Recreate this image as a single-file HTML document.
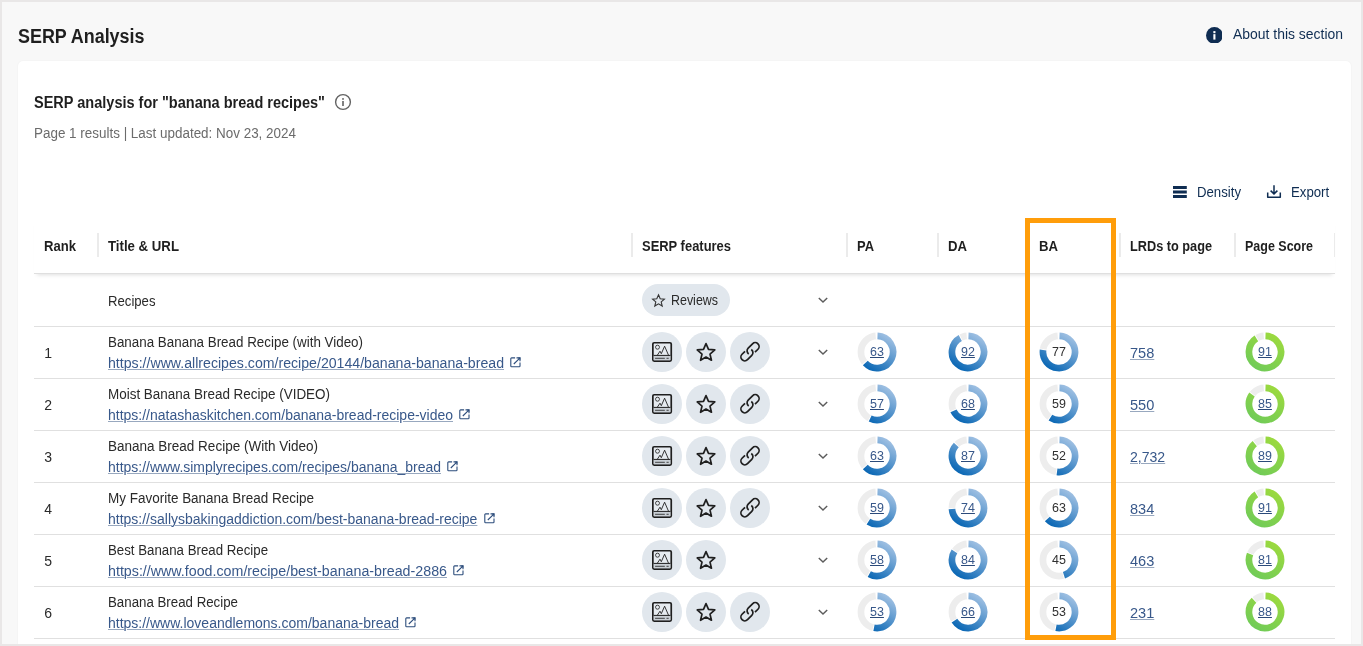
<!DOCTYPE html>
<html lang="en"><head><meta charset="utf-8"><title>SERP Analysis</title>
<style>
html,body{margin:0;padding:0}
body{width:1363px;height:646px;overflow:hidden;position:relative;background:#f8f8f8;font-family:"Liberation Sans",sans-serif;color:#2a2a2a}
.frame{position:absolute;left:0;top:0;width:1359px;height:642px;border:2px solid #e9e7e7;z-index:50;pointer-events:none}
.card{position:absolute;left:18px;top:61px;width:1333px;height:600px;background:#fff;border-radius:5px;box-shadow:0 0 2px rgba(0,0,0,.06)}
.t{position:absolute;white-space:nowrap;margin:0;font-weight:400;transform-origin:0 0;line-height:1.2}
.pb{display:inline-block;width:0;height:0}
#L{position:absolute;left:0;top:0;width:1363px;height:646px;will-change:transform}
.b{font-weight:700}
.navy{color:#0f2d52}
.gray{color:#6b6b6b}
.lk{color:#38588a;text-decoration:underline;text-decoration-thickness:1px;text-underline-offset:1px;text-decoration-color:rgba(49,82,127,.5)}
.nl{text-decoration-color:#2b4a7a}
.ic,.dn{position:absolute;display:block}
.hl{position:absolute;left:34px;width:1301px;height:1px;background:#e0e0e0}
.sep{position:absolute;top:233px;width:2px;height:24px;background:#ebebeb}
.hsh{position:absolute;left:34px;top:219px;width:1301px;height:54px;border-bottom:1px solid #dfdfdf;box-shadow:0 4px 4px -3px rgba(0,0,0,.13)}
.pill{position:absolute;left:642px;top:284px;width:88px;height:32px;border-radius:16px;background:#e1e7ed}
.ob{position:absolute;left:1025px;top:218px;width:81px;height:412px;border:5px solid #ff9d0a;z-index:20}
</style></head><body>
<div class="card"></div>
<div id="L">
<svg width="0" height="0" style="position:absolute"><defs>
<linearGradient id="gb" gradientUnits="userSpaceOnUse" x1="32" y1="3" x2="10" y2="37"><stop offset="0" stop-color="#a4c3e4"/><stop offset="1" stop-color="#0866b4"/></linearGradient>
<linearGradient id="gg" gradientUnits="userSpaceOnUse" x1="32" y1="3" x2="10" y2="37"><stop offset="0" stop-color="#9dda3e"/><stop offset="1" stop-color="#70cb58"/></linearGradient>
</defs></svg>

<h1 class="t b" id="t1" style="left:18px;top:24.01px;font-size:20px;transform:scaleX(0.896);color:#1f1f1f;">SERP Analysis</h1>
<svg class="ic" style="left:1205.6px;top:26.6px" width="16.8" height="16.8" viewBox="0 0 16 16"><circle cx="8" cy="8" r="8" fill="#0f2d52"/><rect x="7" y="6.8" width="2" height="5.2" fill="#fff"/><rect x="7" y="3.9" width="2" height="2" fill="#fff"/></svg>
<span class="t navy" id="t2" style="left:1233px;top:26.00px;font-size:14px;transform:scaleX(0.9953);">About this section</span>
<h2 class="t b" id="t3" style="left:34px;top:93.00px;font-size:16px;transform:scaleX(0.9071);color:#1f1f1f;">SERP analysis for "banana bread recipes"</h2>
<svg class="ic" style="left:334px;top:93px" width="18" height="18" viewBox="0 0 18 18"><circle cx="9" cy="9" r="7.4" fill="none" stroke="#636363" stroke-width="1.4"/><rect x="8.2" y="8" width="1.6" height="5" fill="#636363"/><rect x="8.2" y="5.1" width="1.6" height="1.7" fill="#636363"/></svg>
<span class="t gray" id="t4" style="left:34px;top:125.00px;font-size:14px;transform:scaleX(0.9599);">Page 1 results | Last updated: Nov 23, 2024</span>
<svg class="ic" style="left:1173px;top:186px" width="14" height="12" viewBox="0 0 14 12"><path d="M0 1.5H13.8M0 6H13.8M0 10.5H13.8" stroke="#0f2d52" stroke-width="2.9"/></svg>
<span class="t navy" id="t5" style="left:1196.8px;top:183.81px;font-size:14px;transform:scaleX(0.9424);">Density</span>
<svg class="ic" style="left:1266px;top:184px" width="16" height="16" viewBox="0 0 16 16"><path d="M1.7 8.5V13.3H14.3V8.5" fill="none" stroke="#0f2d52" stroke-width="1.5" stroke-linejoin="round"/><path d="M8 1.2V9.6M4.6 6.6L8 9.9L11.4 6.6" fill="none" stroke="#0f2d52" stroke-width="1.5"/></svg>
<span class="t navy" id="t6" style="left:1291.2px;top:183.81px;font-size:14px;transform:scaleX(0.9439);">Export</span>
<span class="t b" id="t7" style="left:44px;top:238.00px;font-size:14px;transform:scaleX(0.9347);color:#1f1f1f;">Rank</span>
<span class="t b" id="t8" style="left:108px;top:238.00px;font-size:14px;transform:scaleX(0.9441);color:#1f1f1f;">Title &amp; URL</span>
<span class="t b" id="t9" style="left:642px;top:238.00px;font-size:14px;transform:scaleX(0.9248);color:#1f1f1f;">SERP features</span>
<span class="t b" id="t10" style="left:856.6px;top:238.00px;font-size:14px;transform:scaleX(0.9228);color:#1f1f1f;">PA</span>
<span class="t b" id="t11" style="left:948px;top:238.00px;font-size:14px;transform:scaleX(0.939);color:#1f1f1f;">DA</span>
<span class="t b" id="t12" style="left:1039px;top:238.00px;font-size:14px;transform:scaleX(0.939);color:#1f1f1f;">BA</span>
<span class="t b" id="t13" style="left:1130px;top:238.00px;font-size:14px;transform:scaleX(0.9087);color:#1f1f1f;">LRDs to page</span>
<span class="t b" id="t14" style="left:1245px;top:238.00px;font-size:14px;transform:scaleX(0.8916);color:#1f1f1f;">Page Score</span>
<div class="sep" style="left:97px"></div>
<div class="sep" style="left:631px"></div>
<div class="sep" style="left:846px"></div>
<div class="sep" style="left:937px"></div>
<div class="sep" style="left:1028px"></div>
<div class="sep" style="left:1119px"></div>
<div class="sep" style="left:1234px"></div>
<div class="sep" style="left:1334px;width:1px"></div>
<div class="hsh"></div>
<span class="t " id="t15" style="left:108.3px;top:293.00px;font-size:14px;transform:scaleX(0.9389);">Recipes</span>
<div class="pill"></div>
<svg class="ic" style="left:650.7px;top:292.6px" width="15" height="15" viewBox="0 0 15 15"><path d="M7.5 1.8L9.2 5.7L13.4 6.1L10.2 8.9L11.2 13L7.5 10.8L3.8 13L4.8 8.9L1.6 6.1L5.8 5.7Z" fill="none" stroke="#333" stroke-width="1.1"/></svg>
<span class="t " id="t16" style="left:671.3px;top:292.00px;font-size:14px;transform:scaleX(0.8884);">Reviews</span>
<svg class="ic" style="left:817px;top:296px" width="12" height="8" viewBox="0 0 12 8"><path d="M1.8 1.9L6 5.9L10.2 1.9" fill="none" stroke="#5c5c5c" stroke-width="1.45"/></svg>
<div class="hl" style="top:326px"></div>
<div class="hl" style="top:378px"></div>
<div class="hl" style="top:430px"></div>
<div class="hl" style="top:482px"></div>
<div class="hl" style="top:534px"></div>
<div class="hl" style="top:586px"></div>
<div class="hl" style="top:638px"></div>
<span class="t " id="t17" style="left:44.3px;top:345.00px;font-size:14px;">1</span>
<span class="t " id="t18" style="left:108px;top:334.00px;font-size:14px;transform:scaleX(0.9561);">Banana Banana Bread Recipe (with Video)</span>
<a class="t lk" id="t19" style="left:108px;top:355.00px;font-size:14px;transform:scaleX(1.0096);">https://www.allrecipes.com/recipe/20144/banana-banana-bread</a>
<svg class="ic" style="left:510.1px;top:356.8px" width="12" height="12" viewBox="0 0 12 12"><path d="M5.1 .9H1.6A.8.8 0 0 0 .8 1.7V8.9A.8.8 0 0 0 1.6 9.7H9.2A.8.8 0 0 0 10 8.9V5.4" fill="none" stroke="#2d4d7c" stroke-width="1.1"/><path d="M6.5 .9H10V4.2M9.8 1.1L3.8 7" fill="none" stroke="#2d4d7c" stroke-width="1.1"/><path d="M10.4 .5V2.9L8 .5Z" fill="#2d4d7c"/></svg>
<svg class="ic" style="left:642px;top:332px" width="40" height="40" viewBox="0 0 40 40"><circle cx="20" cy="20" r="20" fill="#e1e7ed"/><rect x="10.85" y="10.75" width="18.4" height="18.3" rx="1.3" fill="#e6ebf0" stroke="#1f1f1f" stroke-width="1.7"/><rect x="11.7" y="23.4" width="16.7" height="4.8" fill="#c9cfd5"/><path d="M11.5 23.4H28.5" fill="none" stroke="#1f1f1f" stroke-width="1"/><path d="M13.1 26.3H22.8M24.5 26.3H26.7" fill="none" stroke="#1f1f1f" stroke-width="0.8"/><circle cx="15.5" cy="15.2" r="2" fill="none" stroke="#1f1f1f" stroke-width="0.8"/><path d="M15.2 23.4L18 19.2L19.3 21.7L22.6 14.2L26.6 23.4" fill="none" stroke="#1f1f1f" stroke-width="0.9" stroke-linejoin="round"/></svg>
<svg class="ic" style="left:686px;top:332px" width="40" height="40" viewBox="0 0 40 40"><circle cx="20" cy="20" r="20" fill="#e1e7ed"/><path d="M20 11.6L22.5 17.4L28.8 17.95L24.0 22.1L25.45 28.25L20 25L14.55 28.25L16.0 22.1L11.2 17.95L17.5 17.4Z" fill="none" stroke="#1f1f1f" stroke-width="1.7" stroke-linejoin="round"/></svg>
<svg class="ic" style="left:730px;top:332px" width="40" height="40" viewBox="0 0 40 40"><circle cx="20" cy="20" r="20" fill="#e1e7ed"/><g transform="translate(20 19.75) rotate(-45)" fill="none" stroke="#1f1f1f" stroke-width="1.7"><path d="M3.2 3.85H7.4A3.85 3.85 0 0 0 7.4 -3.85H1.3A3.85 3.85 0 0 0 -2.49 0.67"/><path d="M-3.2 -3.85H-7.4A3.85 3.85 0 0 0 -7.4 3.85H-1.3A3.85 3.85 0 0 0 2.49 -0.67"/></g></svg>
<svg class="ic" style="left:817px;top:348px" width="12" height="8" viewBox="0 0 12 8"><path d="M1.8 1.9L6 5.9L10.2 1.9" fill="none" stroke="#5c5c5c" stroke-width="1.45"/></svg>
<svg class="dn" style="left:857.15px;top:332.15px" width="40" height="40" viewBox="0 0 40 40"><circle cx="20" cy="20" r="16.05" fill="none" stroke="#ededed" stroke-width="6.7"/><path d="M18.70 4.00A16.05 16.05 0 1 1 7.70 30.31" fill="none" stroke="#fff" stroke-width="7.7"/><path d="M20.50 3.96A16.05 16.05 0 1 1 8.30 30.99" fill="none" stroke="url(#gb)" stroke-width="6.7"/></svg>
<a class="t lk nl" id="t20" style="left:870.05px;top:345.01px;font-size:12px;transform:scaleX(1.0405);">63</a>
<svg class="dn" style="left:948.15px;top:332.15px" width="40" height="40" viewBox="0 0 40 40"><circle cx="20" cy="20" r="16.05" fill="none" stroke="#ededed" stroke-width="6.7"/><path d="M18.70 4.00A16.05 16.05 0 1 1 13.07 5.52" fill="none" stroke="#fff" stroke-width="7.7"/><path d="M20.50 3.96A16.05 16.05 0 1 1 12.27 5.94" fill="none" stroke="url(#gb)" stroke-width="6.7"/></svg>
<a class="t lk nl" id="t21" style="left:961.05px;top:345.01px;font-size:12px;transform:scaleX(1.0405);">92</a>
<svg class="dn" style="left:1039.15px;top:332.15px" width="40" height="40" viewBox="0 0 40 40"><circle cx="20" cy="20" r="16.05" fill="none" stroke="#ededed" stroke-width="6.7"/><path d="M18.70 4.00A16.05 16.05 0 1 1 4.21 17.10" fill="none" stroke="#fff" stroke-width="7.7"/><path d="M20.50 3.96A16.05 16.05 0 1 1 4.08 17.99" fill="none" stroke="url(#gb)" stroke-width="6.7"/></svg>
<span class="t " id="t22" style="left:1052.05px;top:345.01px;font-size:12px;transform:scaleX(1.0405);color:#303030;">77</span>
<a class="t lk" id="t23" style="left:1130px;top:345.00px;font-size:14px;transform:scaleX(1.0403);">758</a>
<svg class="dn" style="left:1245.15px;top:332.15px" width="40" height="40" viewBox="0 0 40 40"><circle cx="20" cy="20" r="16.05" fill="none" stroke="#ededed" stroke-width="6.7"/><path d="M18.70 4.00A16.05 16.05 0 1 1 12.17 5.99" fill="none" stroke="#fff" stroke-width="7.7"/><path d="M20.50 3.96A16.05 16.05 0 1 1 11.40 6.45" fill="none" stroke="url(#gg)" stroke-width="6.7"/></svg>
<a class="t lk nl" id="t24" style="left:1258.05px;top:345.01px;font-size:12px;transform:scaleX(1.0405);">91</a>
<span class="t " id="t25" style="left:44.3px;top:397.00px;font-size:14px;">2</span>
<span class="t " id="t26" style="left:108px;top:386.00px;font-size:14px;transform:scaleX(0.9606);">Moist Banana Bread Recipe (VIDEO)</span>
<a class="t lk" id="t27" style="left:108px;top:407.00px;font-size:14px;transform:scaleX(0.9984);">https://natashaskitchen.com/banana-bread-recipe-video</a>
<svg class="ic" style="left:459.1px;top:408.8px" width="12" height="12" viewBox="0 0 12 12"><path d="M5.1 .9H1.6A.8.8 0 0 0 .8 1.7V8.9A.8.8 0 0 0 1.6 9.7H9.2A.8.8 0 0 0 10 8.9V5.4" fill="none" stroke="#2d4d7c" stroke-width="1.1"/><path d="M6.5 .9H10V4.2M9.8 1.1L3.8 7" fill="none" stroke="#2d4d7c" stroke-width="1.1"/><path d="M10.4 .5V2.9L8 .5Z" fill="#2d4d7c"/></svg>
<svg class="ic" style="left:642px;top:384px" width="40" height="40" viewBox="0 0 40 40"><circle cx="20" cy="20" r="20" fill="#e1e7ed"/><rect x="10.85" y="10.75" width="18.4" height="18.3" rx="1.3" fill="#e6ebf0" stroke="#1f1f1f" stroke-width="1.7"/><rect x="11.7" y="23.4" width="16.7" height="4.8" fill="#c9cfd5"/><path d="M11.5 23.4H28.5" fill="none" stroke="#1f1f1f" stroke-width="1"/><path d="M13.1 26.3H22.8M24.5 26.3H26.7" fill="none" stroke="#1f1f1f" stroke-width="0.8"/><circle cx="15.5" cy="15.2" r="2" fill="none" stroke="#1f1f1f" stroke-width="0.8"/><path d="M15.2 23.4L18 19.2L19.3 21.7L22.6 14.2L26.6 23.4" fill="none" stroke="#1f1f1f" stroke-width="0.9" stroke-linejoin="round"/></svg>
<svg class="ic" style="left:686px;top:384px" width="40" height="40" viewBox="0 0 40 40"><circle cx="20" cy="20" r="20" fill="#e1e7ed"/><path d="M20 11.6L22.5 17.4L28.8 17.95L24.0 22.1L25.45 28.25L20 25L14.55 28.25L16.0 22.1L11.2 17.95L17.5 17.4Z" fill="none" stroke="#1f1f1f" stroke-width="1.7" stroke-linejoin="round"/></svg>
<svg class="ic" style="left:730px;top:384px" width="40" height="40" viewBox="0 0 40 40"><circle cx="20" cy="20" r="20" fill="#e1e7ed"/><g transform="translate(20 19.75) rotate(-45)" fill="none" stroke="#1f1f1f" stroke-width="1.7"><path d="M3.2 3.85H7.4A3.85 3.85 0 0 0 7.4 -3.85H1.3A3.85 3.85 0 0 0 -2.49 0.67"/><path d="M-3.2 -3.85H-7.4A3.85 3.85 0 0 0 -7.4 3.85H-1.3A3.85 3.85 0 0 0 2.49 -0.67"/></g></svg>
<svg class="ic" style="left:817px;top:400px" width="12" height="8" viewBox="0 0 12 8"><path d="M1.8 1.9L6 5.9L10.2 1.9" fill="none" stroke="#5c5c5c" stroke-width="1.45"/></svg>
<svg class="dn" style="left:857.15px;top:384.15px" width="40" height="40" viewBox="0 0 40 40"><circle cx="20" cy="20" r="16.05" fill="none" stroke="#ededed" stroke-width="6.7"/><path d="M18.70 4.00A16.05 16.05 0 1 1 12.36 34.12" fill="none" stroke="#fff" stroke-width="7.7"/><path d="M20.50 3.96A16.05 16.05 0 1 1 13.17 34.52" fill="none" stroke="url(#gb)" stroke-width="6.7"/></svg>
<a class="t lk nl" id="t28" style="left:870.05px;top:397.01px;font-size:12px;transform:scaleX(1.0405);">57</a>
<svg class="dn" style="left:948.15px;top:384.15px" width="40" height="40" viewBox="0 0 40 40"><circle cx="20" cy="20" r="16.05" fill="none" stroke="#ededed" stroke-width="6.7"/><path d="M18.70 4.00A16.05 16.05 0 1 1 5.12 26.01" fill="none" stroke="#fff" stroke-width="7.7"/><path d="M20.50 3.96A16.05 16.05 0 1 1 5.48 26.83" fill="none" stroke="url(#gb)" stroke-width="6.7"/></svg>
<a class="t lk nl" id="t29" style="left:961.05px;top:397.01px;font-size:12px;transform:scaleX(1.0405);">68</a>
<svg class="dn" style="left:1039.15px;top:384.15px" width="40" height="40" viewBox="0 0 40 40"><circle cx="20" cy="20" r="16.05" fill="none" stroke="#ededed" stroke-width="6.7"/><path d="M18.70 4.00A16.05 16.05 0 1 1 10.65 33.05" fill="none" stroke="#fff" stroke-width="7.7"/><path d="M20.50 3.96A16.05 16.05 0 1 1 11.40 33.55" fill="none" stroke="url(#gb)" stroke-width="6.7"/></svg>
<span class="t " id="t30" style="left:1052.05px;top:397.01px;font-size:12px;transform:scaleX(1.0405);color:#303030;">59</span>
<a class="t lk" id="t31" style="left:1130px;top:397.00px;font-size:14px;transform:scaleX(1.0403);">550</a>
<svg class="dn" style="left:1245.15px;top:384.15px" width="40" height="40" viewBox="0 0 40 40"><circle cx="20" cy="20" r="16.05" fill="none" stroke="#ededed" stroke-width="6.7"/><path d="M18.70 4.00A16.05 16.05 0 1 1 7.56 9.85" fill="none" stroke="#fff" stroke-width="7.7"/><path d="M20.50 3.96A16.05 16.05 0 1 1 7.02 10.57" fill="none" stroke="url(#gg)" stroke-width="6.7"/></svg>
<a class="t lk nl" id="t32" style="left:1258.05px;top:397.01px;font-size:12px;transform:scaleX(1.0405);">85</a>
<span class="t " id="t33" style="left:44.3px;top:449.00px;font-size:14px;">3</span>
<span class="t " id="t34" style="left:108px;top:438.00px;font-size:14px;transform:scaleX(0.9648);">Banana Bread Recipe (With Video)</span>
<a class="t lk" id="t35" style="left:108px;top:459.00px;font-size:14px;transform:scaleX(0.9975);">https://www.simplyrecipes.com/recipes/banana_bread</a>
<svg class="ic" style="left:447.1px;top:460.8px" width="12" height="12" viewBox="0 0 12 12"><path d="M5.1 .9H1.6A.8.8 0 0 0 .8 1.7V8.9A.8.8 0 0 0 1.6 9.7H9.2A.8.8 0 0 0 10 8.9V5.4" fill="none" stroke="#2d4d7c" stroke-width="1.1"/><path d="M6.5 .9H10V4.2M9.8 1.1L3.8 7" fill="none" stroke="#2d4d7c" stroke-width="1.1"/><path d="M10.4 .5V2.9L8 .5Z" fill="#2d4d7c"/></svg>
<svg class="ic" style="left:642px;top:436px" width="40" height="40" viewBox="0 0 40 40"><circle cx="20" cy="20" r="20" fill="#e1e7ed"/><rect x="10.85" y="10.75" width="18.4" height="18.3" rx="1.3" fill="#e6ebf0" stroke="#1f1f1f" stroke-width="1.7"/><rect x="11.7" y="23.4" width="16.7" height="4.8" fill="#c9cfd5"/><path d="M11.5 23.4H28.5" fill="none" stroke="#1f1f1f" stroke-width="1"/><path d="M13.1 26.3H22.8M24.5 26.3H26.7" fill="none" stroke="#1f1f1f" stroke-width="0.8"/><circle cx="15.5" cy="15.2" r="2" fill="none" stroke="#1f1f1f" stroke-width="0.8"/><path d="M15.2 23.4L18 19.2L19.3 21.7L22.6 14.2L26.6 23.4" fill="none" stroke="#1f1f1f" stroke-width="0.9" stroke-linejoin="round"/></svg>
<svg class="ic" style="left:686px;top:436px" width="40" height="40" viewBox="0 0 40 40"><circle cx="20" cy="20" r="20" fill="#e1e7ed"/><path d="M20 11.6L22.5 17.4L28.8 17.95L24.0 22.1L25.45 28.25L20 25L14.55 28.25L16.0 22.1L11.2 17.95L17.5 17.4Z" fill="none" stroke="#1f1f1f" stroke-width="1.7" stroke-linejoin="round"/></svg>
<svg class="ic" style="left:730px;top:436px" width="40" height="40" viewBox="0 0 40 40"><circle cx="20" cy="20" r="20" fill="#e1e7ed"/><g transform="translate(20 19.75) rotate(-45)" fill="none" stroke="#1f1f1f" stroke-width="1.7"><path d="M3.2 3.85H7.4A3.85 3.85 0 0 0 7.4 -3.85H1.3A3.85 3.85 0 0 0 -2.49 0.67"/><path d="M-3.2 -3.85H-7.4A3.85 3.85 0 0 0 -7.4 3.85H-1.3A3.85 3.85 0 0 0 2.49 -0.67"/></g></svg>
<svg class="ic" style="left:817px;top:452px" width="12" height="8" viewBox="0 0 12 8"><path d="M1.8 1.9L6 5.9L10.2 1.9" fill="none" stroke="#5c5c5c" stroke-width="1.45"/></svg>
<svg class="dn" style="left:857.15px;top:436.15px" width="40" height="40" viewBox="0 0 40 40"><circle cx="20" cy="20" r="16.05" fill="none" stroke="#ededed" stroke-width="6.7"/><path d="M18.70 4.00A16.05 16.05 0 1 1 7.70 30.31" fill="none" stroke="#fff" stroke-width="7.7"/><path d="M20.50 3.96A16.05 16.05 0 1 1 8.30 30.99" fill="none" stroke="url(#gb)" stroke-width="6.7"/></svg>
<a class="t lk nl" id="t36" style="left:870.05px;top:449.01px;font-size:12px;transform:scaleX(1.0405);">63</a>
<svg class="dn" style="left:948.15px;top:436.15px" width="40" height="40" viewBox="0 0 40 40"><circle cx="20" cy="20" r="16.05" fill="none" stroke="#ededed" stroke-width="6.7"/><path d="M18.70 4.00A16.05 16.05 0 1 1 8.93 8.37" fill="none" stroke="#fff" stroke-width="7.7"/><path d="M20.50 3.96A16.05 16.05 0 1 1 8.30 9.01" fill="none" stroke="url(#gb)" stroke-width="6.7"/></svg>
<a class="t lk nl" id="t37" style="left:961.05px;top:449.01px;font-size:12px;transform:scaleX(1.0405);">87</a>
<svg class="dn" style="left:1039.15px;top:436.15px" width="40" height="40" viewBox="0 0 40 40"><circle cx="20" cy="20" r="16.05" fill="none" stroke="#ededed" stroke-width="6.7"/><path d="M18.70 4.00A16.05 16.05 0 1 1 17.10 35.79" fill="none" stroke="#fff" stroke-width="7.7"/><path d="M20.50 3.96A16.05 16.05 0 1 1 17.99 35.92" fill="none" stroke="url(#gb)" stroke-width="6.7"/></svg>
<span class="t " id="t38" style="left:1052.05px;top:449.01px;font-size:12px;transform:scaleX(1.0405);color:#303030;">52</span>
<a class="t lk" id="t39" style="left:1130px;top:449.00px;font-size:14px;transform:scaleX(1.0044);">2,732</a>
<svg class="dn" style="left:1245.15px;top:436.15px" width="40" height="40" viewBox="0 0 40 40"><circle cx="20" cy="20" r="16.05" fill="none" stroke="#ededed" stroke-width="6.7"/><path d="M18.70 4.00A16.05 16.05 0 1 1 10.48 7.08" fill="none" stroke="#fff" stroke-width="7.7"/><path d="M20.50 3.96A16.05 16.05 0 1 1 9.77 7.63" fill="none" stroke="url(#gg)" stroke-width="6.7"/></svg>
<a class="t lk nl" id="t40" style="left:1258.05px;top:449.01px;font-size:12px;transform:scaleX(1.0405);">89</a>
<span class="t " id="t41" style="left:44.3px;top:501.00px;font-size:14px;">4</span>
<span class="t " id="t42" style="left:108px;top:490.00px;font-size:14px;transform:scaleX(0.9626);">My Favorite Banana Bread Recipe</span>
<a class="t lk" id="t43" style="left:108px;top:511.00px;font-size:14px;transform:scaleX(0.9993);">https://sallysbakingaddiction.com/best-banana-bread-recipe</a>
<svg class="ic" style="left:483.5px;top:512.8px" width="12" height="12" viewBox="0 0 12 12"><path d="M5.1 .9H1.6A.8.8 0 0 0 .8 1.7V8.9A.8.8 0 0 0 1.6 9.7H9.2A.8.8 0 0 0 10 8.9V5.4" fill="none" stroke="#2d4d7c" stroke-width="1.1"/><path d="M6.5 .9H10V4.2M9.8 1.1L3.8 7" fill="none" stroke="#2d4d7c" stroke-width="1.1"/><path d="M10.4 .5V2.9L8 .5Z" fill="#2d4d7c"/></svg>
<svg class="ic" style="left:642px;top:488px" width="40" height="40" viewBox="0 0 40 40"><circle cx="20" cy="20" r="20" fill="#e1e7ed"/><rect x="10.85" y="10.75" width="18.4" height="18.3" rx="1.3" fill="#e6ebf0" stroke="#1f1f1f" stroke-width="1.7"/><rect x="11.7" y="23.4" width="16.7" height="4.8" fill="#c9cfd5"/><path d="M11.5 23.4H28.5" fill="none" stroke="#1f1f1f" stroke-width="1"/><path d="M13.1 26.3H22.8M24.5 26.3H26.7" fill="none" stroke="#1f1f1f" stroke-width="0.8"/><circle cx="15.5" cy="15.2" r="2" fill="none" stroke="#1f1f1f" stroke-width="0.8"/><path d="M15.2 23.4L18 19.2L19.3 21.7L22.6 14.2L26.6 23.4" fill="none" stroke="#1f1f1f" stroke-width="0.9" stroke-linejoin="round"/></svg>
<svg class="ic" style="left:686px;top:488px" width="40" height="40" viewBox="0 0 40 40"><circle cx="20" cy="20" r="20" fill="#e1e7ed"/><path d="M20 11.6L22.5 17.4L28.8 17.95L24.0 22.1L25.45 28.25L20 25L14.55 28.25L16.0 22.1L11.2 17.95L17.5 17.4Z" fill="none" stroke="#1f1f1f" stroke-width="1.7" stroke-linejoin="round"/></svg>
<svg class="ic" style="left:730px;top:488px" width="40" height="40" viewBox="0 0 40 40"><circle cx="20" cy="20" r="20" fill="#e1e7ed"/><g transform="translate(20 19.75) rotate(-45)" fill="none" stroke="#1f1f1f" stroke-width="1.7"><path d="M3.2 3.85H7.4A3.85 3.85 0 0 0 7.4 -3.85H1.3A3.85 3.85 0 0 0 -2.49 0.67"/><path d="M-3.2 -3.85H-7.4A3.85 3.85 0 0 0 -7.4 3.85H-1.3A3.85 3.85 0 0 0 2.49 -0.67"/></g></svg>
<svg class="ic" style="left:817px;top:504px" width="12" height="8" viewBox="0 0 12 8"><path d="M1.8 1.9L6 5.9L10.2 1.9" fill="none" stroke="#5c5c5c" stroke-width="1.45"/></svg>
<svg class="dn" style="left:857.15px;top:488.15px" width="40" height="40" viewBox="0 0 40 40"><circle cx="20" cy="20" r="16.05" fill="none" stroke="#ededed" stroke-width="6.7"/><path d="M18.70 4.00A16.05 16.05 0 1 1 10.65 33.05" fill="none" stroke="#fff" stroke-width="7.7"/><path d="M20.50 3.96A16.05 16.05 0 1 1 11.40 33.55" fill="none" stroke="url(#gb)" stroke-width="6.7"/></svg>
<a class="t lk nl" id="t44" style="left:870.05px;top:501.01px;font-size:12px;transform:scaleX(1.0405);">59</a>
<svg class="dn" style="left:948.15px;top:488.15px" width="40" height="40" viewBox="0 0 40 40"><circle cx="20" cy="20" r="16.05" fill="none" stroke="#ededed" stroke-width="6.7"/><path d="M18.70 4.00A16.05 16.05 0 1 1 3.95 20.11" fill="none" stroke="#fff" stroke-width="7.7"/><path d="M20.50 3.96A16.05 16.05 0 1 1 3.98 21.01" fill="none" stroke="url(#gb)" stroke-width="6.7"/></svg>
<a class="t lk nl" id="t45" style="left:961.05px;top:501.01px;font-size:12px;transform:scaleX(1.0405);">74</a>
<svg class="dn" style="left:1039.15px;top:488.15px" width="40" height="40" viewBox="0 0 40 40"><circle cx="20" cy="20" r="16.05" fill="none" stroke="#ededed" stroke-width="6.7"/><path d="M18.70 4.00A16.05 16.05 0 1 1 7.70 30.31" fill="none" stroke="#fff" stroke-width="7.7"/><path d="M20.50 3.96A16.05 16.05 0 1 1 8.30 30.99" fill="none" stroke="url(#gb)" stroke-width="6.7"/></svg>
<span class="t " id="t46" style="left:1052.05px;top:501.01px;font-size:12px;transform:scaleX(1.0405);color:#303030;">63</span>
<a class="t lk" id="t47" style="left:1130px;top:501.00px;font-size:14px;transform:scaleX(1.0403);">834</a>
<svg class="dn" style="left:1245.15px;top:488.15px" width="40" height="40" viewBox="0 0 40 40"><circle cx="20" cy="20" r="16.05" fill="none" stroke="#ededed" stroke-width="6.7"/><path d="M18.70 4.00A16.05 16.05 0 1 1 12.17 5.99" fill="none" stroke="#fff" stroke-width="7.7"/><path d="M20.50 3.96A16.05 16.05 0 1 1 11.40 6.45" fill="none" stroke="url(#gg)" stroke-width="6.7"/></svg>
<a class="t lk nl" id="t48" style="left:1258.05px;top:501.01px;font-size:12px;transform:scaleX(1.0405);">91</a>
<span class="t " id="t49" style="left:44.3px;top:553.00px;font-size:14px;">5</span>
<span class="t " id="t50" style="left:108px;top:542.00px;font-size:14px;transform:scaleX(0.9474);">Best Banana Bread Recipe</span>
<a class="t lk" id="t51" style="left:108px;top:563.00px;font-size:14px;transform:scaleX(1.0177);">https://www.food.com/recipe/best-banana-bread-2886</a>
<svg class="ic" style="left:453.1px;top:564.8px" width="12" height="12" viewBox="0 0 12 12"><path d="M5.1 .9H1.6A.8.8 0 0 0 .8 1.7V8.9A.8.8 0 0 0 1.6 9.7H9.2A.8.8 0 0 0 10 8.9V5.4" fill="none" stroke="#2d4d7c" stroke-width="1.1"/><path d="M6.5 .9H10V4.2M9.8 1.1L3.8 7" fill="none" stroke="#2d4d7c" stroke-width="1.1"/><path d="M10.4 .5V2.9L8 .5Z" fill="#2d4d7c"/></svg>
<svg class="ic" style="left:642px;top:540px" width="40" height="40" viewBox="0 0 40 40"><circle cx="20" cy="20" r="20" fill="#e1e7ed"/><rect x="10.85" y="10.75" width="18.4" height="18.3" rx="1.3" fill="#e6ebf0" stroke="#1f1f1f" stroke-width="1.7"/><rect x="11.7" y="23.4" width="16.7" height="4.8" fill="#c9cfd5"/><path d="M11.5 23.4H28.5" fill="none" stroke="#1f1f1f" stroke-width="1"/><path d="M13.1 26.3H22.8M24.5 26.3H26.7" fill="none" stroke="#1f1f1f" stroke-width="0.8"/><circle cx="15.5" cy="15.2" r="2" fill="none" stroke="#1f1f1f" stroke-width="0.8"/><path d="M15.2 23.4L18 19.2L19.3 21.7L22.6 14.2L26.6 23.4" fill="none" stroke="#1f1f1f" stroke-width="0.9" stroke-linejoin="round"/></svg>
<svg class="ic" style="left:686px;top:540px" width="40" height="40" viewBox="0 0 40 40"><circle cx="20" cy="20" r="20" fill="#e1e7ed"/><path d="M20 11.6L22.5 17.4L28.8 17.95L24.0 22.1L25.45 28.25L20 25L14.55 28.25L16.0 22.1L11.2 17.95L17.5 17.4Z" fill="none" stroke="#1f1f1f" stroke-width="1.7" stroke-linejoin="round"/></svg>
<svg class="ic" style="left:817px;top:556px" width="12" height="8" viewBox="0 0 12 8"><path d="M1.8 1.9L6 5.9L10.2 1.9" fill="none" stroke="#5c5c5c" stroke-width="1.45"/></svg>
<svg class="dn" style="left:857.15px;top:540.15px" width="40" height="40" viewBox="0 0 40 40"><circle cx="20" cy="20" r="16.05" fill="none" stroke="#ededed" stroke-width="6.7"/><path d="M18.70 4.00A16.05 16.05 0 1 1 11.49 33.61" fill="none" stroke="#fff" stroke-width="7.7"/><path d="M20.50 3.96A16.05 16.05 0 1 1 12.27 34.06" fill="none" stroke="url(#gb)" stroke-width="6.7"/></svg>
<a class="t lk nl" id="t52" style="left:870.05px;top:553.01px;font-size:12px;transform:scaleX(1.0405);">58</a>
<svg class="dn" style="left:948.15px;top:540.15px" width="40" height="40" viewBox="0 0 40 40"><circle cx="20" cy="20" r="16.05" fill="none" stroke="#ededed" stroke-width="6.7"/><path d="M18.70 4.00A16.05 16.05 0 1 1 6.95 10.65" fill="none" stroke="#fff" stroke-width="7.7"/><path d="M20.50 3.96A16.05 16.05 0 1 1 6.45 11.40" fill="none" stroke="url(#gb)" stroke-width="6.7"/></svg>
<a class="t lk nl" id="t53" style="left:961.05px;top:553.01px;font-size:12px;transform:scaleX(1.0405);">84</a>
<svg class="dn" style="left:1039.15px;top:540.15px" width="40" height="40" viewBox="0 0 40 40"><circle cx="20" cy="20" r="16.05" fill="none" stroke="#ededed" stroke-width="6.7"/><path d="M18.70 4.00A16.05 16.05 0 0 1 24.10 35.52" fill="none" stroke="#fff" stroke-width="7.7"/><path d="M20.50 3.96A16.05 16.05 0 0 1 24.96 35.26" fill="none" stroke="url(#gb)" stroke-width="6.7"/></svg>
<span class="t " id="t54" style="left:1052.05px;top:553.01px;font-size:12px;transform:scaleX(1.0405);color:#303030;">45</span>
<a class="t lk" id="t55" style="left:1130px;top:553.00px;font-size:14px;transform:scaleX(1.0403);">463</a>
<svg class="dn" style="left:1245.15px;top:540.15px" width="40" height="40" viewBox="0 0 40 40"><circle cx="20" cy="20" r="16.05" fill="none" stroke="#ededed" stroke-width="6.7"/><path d="M18.70 4.00A16.05 16.05 0 1 1 5.43 13.26" fill="none" stroke="#fff" stroke-width="7.7"/><path d="M20.50 3.96A16.05 16.05 0 1 1 5.08 14.09" fill="none" stroke="url(#gg)" stroke-width="6.7"/></svg>
<a class="t lk nl" id="t56" style="left:1258.05px;top:553.01px;font-size:12px;transform:scaleX(1.0405);">81</a>
<span class="t " id="t57" style="left:44.3px;top:605.00px;font-size:14px;">6</span>
<span class="t " id="t58" style="left:108px;top:594.00px;font-size:14px;transform:scaleX(0.9489);">Banana Bread Recipe</span>
<a class="t lk" id="t59" style="left:108px;top:615.00px;font-size:14px;transform:scaleX(0.9998);">https://www.loveandlemons.com/banana-bread</a>
<svg class="ic" style="left:405.1px;top:616.8px" width="12" height="12" viewBox="0 0 12 12"><path d="M5.1 .9H1.6A.8.8 0 0 0 .8 1.7V8.9A.8.8 0 0 0 1.6 9.7H9.2A.8.8 0 0 0 10 8.9V5.4" fill="none" stroke="#2d4d7c" stroke-width="1.1"/><path d="M6.5 .9H10V4.2M9.8 1.1L3.8 7" fill="none" stroke="#2d4d7c" stroke-width="1.1"/><path d="M10.4 .5V2.9L8 .5Z" fill="#2d4d7c"/></svg>
<svg class="ic" style="left:642px;top:592px" width="40" height="40" viewBox="0 0 40 40"><circle cx="20" cy="20" r="20" fill="#e1e7ed"/><rect x="10.85" y="10.75" width="18.4" height="18.3" rx="1.3" fill="#e6ebf0" stroke="#1f1f1f" stroke-width="1.7"/><rect x="11.7" y="23.4" width="16.7" height="4.8" fill="#c9cfd5"/><path d="M11.5 23.4H28.5" fill="none" stroke="#1f1f1f" stroke-width="1"/><path d="M13.1 26.3H22.8M24.5 26.3H26.7" fill="none" stroke="#1f1f1f" stroke-width="0.8"/><circle cx="15.5" cy="15.2" r="2" fill="none" stroke="#1f1f1f" stroke-width="0.8"/><path d="M15.2 23.4L18 19.2L19.3 21.7L22.6 14.2L26.6 23.4" fill="none" stroke="#1f1f1f" stroke-width="0.9" stroke-linejoin="round"/></svg>
<svg class="ic" style="left:686px;top:592px" width="40" height="40" viewBox="0 0 40 40"><circle cx="20" cy="20" r="20" fill="#e1e7ed"/><path d="M20 11.6L22.5 17.4L28.8 17.95L24.0 22.1L25.45 28.25L20 25L14.55 28.25L16.0 22.1L11.2 17.95L17.5 17.4Z" fill="none" stroke="#1f1f1f" stroke-width="1.7" stroke-linejoin="round"/></svg>
<svg class="ic" style="left:730px;top:592px" width="40" height="40" viewBox="0 0 40 40"><circle cx="20" cy="20" r="20" fill="#e1e7ed"/><g transform="translate(20 19.75) rotate(-45)" fill="none" stroke="#1f1f1f" stroke-width="1.7"><path d="M3.2 3.85H7.4A3.85 3.85 0 0 0 7.4 -3.85H1.3A3.85 3.85 0 0 0 -2.49 0.67"/><path d="M-3.2 -3.85H-7.4A3.85 3.85 0 0 0 -7.4 3.85H-1.3A3.85 3.85 0 0 0 2.49 -0.67"/></g></svg>
<svg class="ic" style="left:817px;top:608px" width="12" height="8" viewBox="0 0 12 8"><path d="M1.8 1.9L6 5.9L10.2 1.9" fill="none" stroke="#5c5c5c" stroke-width="1.45"/></svg>
<svg class="dn" style="left:857.15px;top:592.15px" width="40" height="40" viewBox="0 0 40 40"><circle cx="20" cy="20" r="16.05" fill="none" stroke="#ededed" stroke-width="6.7"/><path d="M18.70 4.00A16.05 16.05 0 1 1 16.11 35.57" fill="none" stroke="#fff" stroke-width="7.7"/><path d="M20.50 3.96A16.05 16.05 0 1 1 16.99 35.77" fill="none" stroke="url(#gb)" stroke-width="6.7"/></svg>
<a class="t lk nl" id="t60" style="left:870.05px;top:605.01px;font-size:12px;transform:scaleX(1.0405);">53</a>
<svg class="dn" style="left:948.15px;top:592.15px" width="40" height="40" viewBox="0 0 40 40"><circle cx="20" cy="20" r="16.05" fill="none" stroke="#ededed" stroke-width="6.7"/><path d="M18.70 4.00A16.05 16.05 0 1 1 5.99 27.83" fill="none" stroke="#fff" stroke-width="7.7"/><path d="M20.50 3.96A16.05 16.05 0 1 1 6.45 28.60" fill="none" stroke="url(#gb)" stroke-width="6.7"/></svg>
<a class="t lk nl" id="t61" style="left:961.05px;top:605.01px;font-size:12px;transform:scaleX(1.0405);">66</a>
<svg class="dn" style="left:1039.15px;top:592.15px" width="40" height="40" viewBox="0 0 40 40"><circle cx="20" cy="20" r="16.05" fill="none" stroke="#ededed" stroke-width="6.7"/><path d="M18.70 4.00A16.05 16.05 0 1 1 16.11 35.57" fill="none" stroke="#fff" stroke-width="7.7"/><path d="M20.50 3.96A16.05 16.05 0 1 1 16.99 35.77" fill="none" stroke="url(#gb)" stroke-width="6.7"/></svg>
<span class="t " id="t62" style="left:1052.05px;top:605.01px;font-size:12px;transform:scaleX(1.0405);color:#303030;">53</span>
<a class="t lk" id="t63" style="left:1130px;top:605.00px;font-size:14px;transform:scaleX(1.0403);">231</a>
<svg class="dn" style="left:1245.15px;top:592.15px" width="40" height="40" viewBox="0 0 40 40"><circle cx="20" cy="20" r="16.05" fill="none" stroke="#ededed" stroke-width="6.7"/><path d="M18.70 4.00A16.05 16.05 0 1 1 9.69 7.70" fill="none" stroke="#fff" stroke-width="7.7"/><path d="M20.50 3.96A16.05 16.05 0 1 1 9.01 8.30" fill="none" stroke="url(#gg)" stroke-width="6.7"/></svg>
<a class="t lk nl" id="t64" style="left:1258.05px;top:605.01px;font-size:12px;transform:scaleX(1.0405);">88</a>
</div>
<div class="ob"></div>
<div class="frame"></div>
</body></html>
